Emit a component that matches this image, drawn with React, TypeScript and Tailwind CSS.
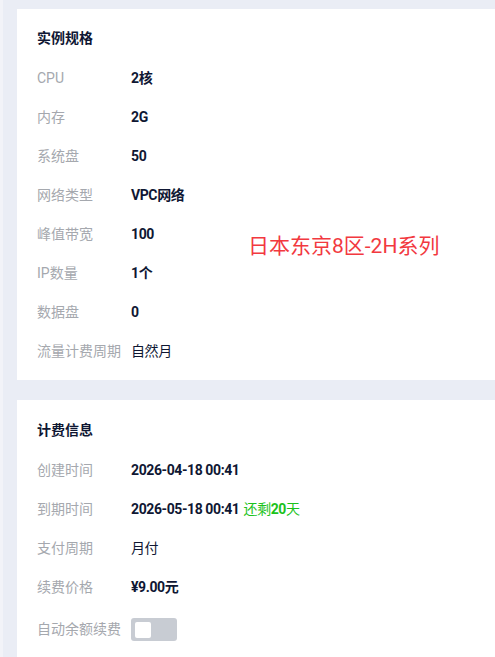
const font = { fontFamily: '"Roboto", "Noto Sans CJK SC", sans-serif' };

type Row = { label: string; value: React.ReactNode; bold?: boolean };

function InfoRow({ label, value, bold = true }: Row) {
  return (
    <div className="flex h-[39px] items-center">
      <div className="w-[94px] shrink-0 text-[14px] text-[#a5a8ae]">{label}</div>
      <div className={`text-[14px] tracking-[-0.4px] text-[#0f1733] ${bold ? "font-bold" : ""}`}>{value}</div>
    </div>
  );
}

const specRows: Row[] = [
  { label: "CPU", value: "2核" },
  { label: "内存", value: "2G" },
  { label: "系统盘", value: "50" },
  { label: "网络类型", value: "VPC网络" },
  { label: "峰值带宽", value: "100" },
  { label: "IP数量", value: "1个" },
  { label: "数据盘", value: "0" },
  { label: "流量计费周期", value: "自然月", bold: false },
];

export default function App() {
  return (
    <div className="min-h-[657px] w-[495px] overflow-hidden bg-[#f2f3f8] pl-[3px]" style={font}>
      <div className="flex min-h-[657px] flex-col gap-5 bg-[#eaedf5] pl-[14px] pt-[9px]">
        <div className="relative bg-white pb-[9px] pl-5 pt-[19px]">
          <div className="h-5 text-[14px] font-bold leading-5 text-[#0f1733]">实例规格</div>
          <div className="mt-[11px]">
            {specRows.map((r) => (
              <InfoRow key={r.label} {...r} />
            ))}
          </div>
          <div className="absolute left-[231px] top-[222px] text-[21px] text-[#f2393f]">日本东京8区-2H系列</div>
        </div>

        <div className="bg-white pb-[20px] pl-5 pt-[20px]">
          <div className="h-5 text-[14px] font-bold leading-5 text-[#0f1733]">计费信息</div>
          <div className="mt-[11px]">
            <InfoRow label="创建时间" value="2026-04-18 00:41" />
            <InfoRow
              label="到期时间"
              value={
                <span>
                  2026-05-18 00:41 <span className="ml-[1px] font-normal text-[#1bc21b]">还剩<span className="font-bold">20</span>天</span>
                </span>
              }
            />
            <InfoRow label="支付周期" value="月付" bold={false} />
            <InfoRow label="续费价格" value="¥9.00元" />
            <div className="mt-[3px] flex h-[39px] items-center">
              <div className="w-[94px] shrink-0 text-[14px] text-[#a5a8ae]">自动余额续费</div>
              <div className="flex h-[23px] w-[46px] items-center rounded-[3px] bg-[#c8ccd3] px-1">
                <div className="h-4 w-4 rounded-[2px] bg-white" />
              </div>
            </div>
          </div>
        </div>
      </div>
    </div>
  );
}
